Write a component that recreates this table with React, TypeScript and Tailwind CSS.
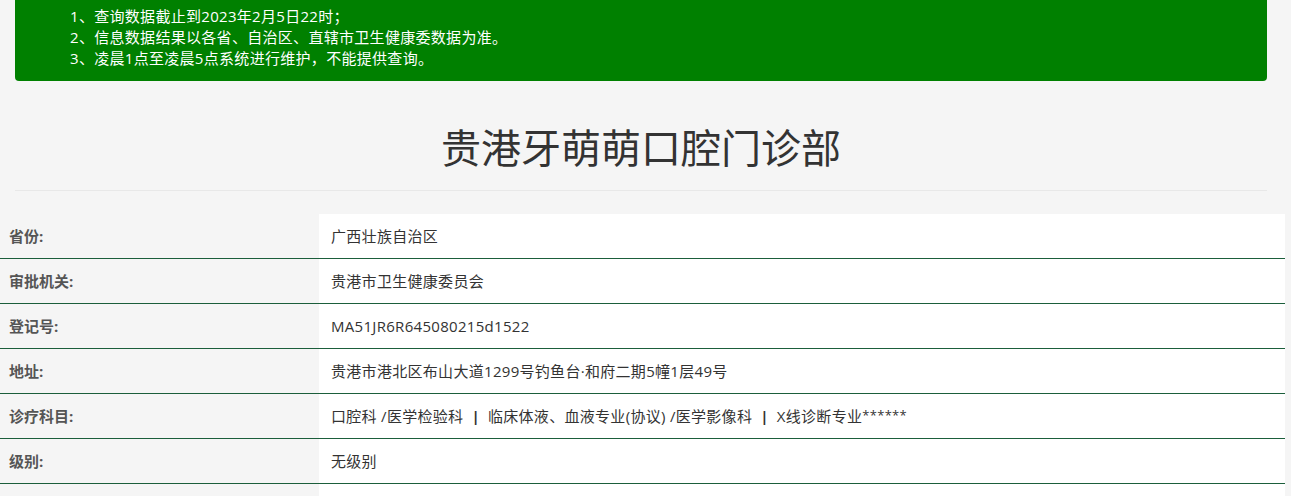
const font = { fontFamily: '"Open Sans", "Noto Sans CJK SC", sans-serif' };

const rows: [string, React.ReactNode][] = [
  ['省份:', '广西壮族自治区'],
  ['审批机关:', '贵港市卫生健康委员会'],
  ['登记号:', 'MA51JR6R645080215d1522'],
  ['地址:', '贵港市港北区布山大道1299号钓鱼台·和府二期5幢1层49号'],
  [
    '诊疗科目:',
    <>
      口腔科 /医学检验科
      <span className="mx-[8px] font-bold">|</span>
      临床体液、血液专业(协议) /医学影像科
      <span className="mx-[8px] font-bold">|</span>
      X线诊断专业<span className="text-[13px]">******</span>
    </>,
  ],
  ['级别:', '无级别'],
  ['', ''],
];

export default function App() {
  return (
    <div className="min-h-screen bg-[#f5f5f5] overflow-hidden" style={font}>
      {/* Notice */}
      <div className="mx-[15px] w-[1252px] bg-[#008000] rounded-b-[4px] pt-[6px] pb-[12px] pl-[55px] text-white text-[15px] leading-[21px] tracking-[0.3px]">
        <p>1、查询数据截止到2023年2月5日22时；</p>
        <p>2、信息数据结果以各省、自治区、直辖市卫生健康委数据为准。</p>
        <p>3、凌晨1点至凌晨5点系统进行维护，不能提供查询。</p>
      </div>

      {/* Title */}
      <div className="mx-[15px] w-[1252px] mt-[38px] pb-[13px] border-b border-[#e8e8e8]">
        <h1 className="text-center text-[40px] leading-[58px] text-[#333]">贵港牙萌萌口腔门诊部</h1>
      </div>

      {/* Detail table */}
      <div className="mt-[23px] w-[1285px]">
        {rows.map(([label, value], i) => (
          <div key={i} className="flex h-[45px] border-b border-[#1b5e3b]">
            <div className="w-[319px] shrink-0 flex items-center pl-[9px] text-[15px] font-bold text-[#555]">
              {label}
            </div>
            <div className="flex-1 bg-white flex items-center pl-[12px] text-[15px] text-[#333] tracking-[0.3px]">
              {value}
            </div>
          </div>
        ))}
      </div>
    </div>
  );
}
